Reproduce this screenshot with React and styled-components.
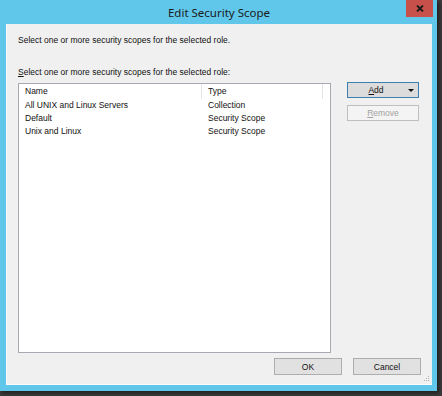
import React from "react";
import styled, { createGlobalStyle } from "styled-components";

const GlobalStyle = createGlobalStyle`
  html, body {
    margin: 0;
    padding: 0;
    background: #3b3b3b;
  }
  #root {
    width: 442px;
    height: 396px;
    overflow: hidden;
  }
`;

const scopes = [
  { name: "All UNIX and Linux Servers", type: "Collection" },
  { name: "Default", type: "Security Scope" },
  { name: "Unix and Linux", type: "Security Scope" },
];

const StyledWindow = styled.div`
  width: 437px;
  height: 391px;
  background: #61c7ea;
  box-sizing: border-box;
  padding: 0 5px 6px 6px;
  display: flex;
  flex-direction: column;
  box-shadow: 2px 2px 4px rgba(0, 0, 0, 0.5);
`;

const StyledTitleBar = styled.div`
  height: 24px;
  display: flex;
  align-items: center;
  justify-content: center;
  position: relative;
  font-family: "Noto Sans", "DejaVu Sans", sans-serif;
  font-size: 11.5px;
  color: #1a1a1a;
  padding-top: 1px;
  box-sizing: border-box;
`;

const StyledClose = styled.div`
  position: absolute;
  top: 0;
  right: -1px;
  width: 27px;
  height: 17px;
  background: #c7504a;
  display: flex;
  align-items: center;
  justify-content: center;
  svg {
    display: block;
  }
`;

const StyledClient = styled.div`
  flex: 1;
  background: #f0f0f0;
  border-left: 1px solid #fbfbfb;
  border-bottom: 1px solid #fbfbfb;
  box-sizing: border-box;
  padding: 0 11px 0 11px;
  display: flex;
  flex-direction: column;
  font-family: "Liberation Sans", Arial, sans-serif;
  font-size: 8.5px;
  color: #111;
  position: relative;
`;

const StyledText = styled.div`
  height: ${(p) => p.h}px;
  display: flex;
  align-items: flex-end;
  line-height: 10px;
  padding-bottom: ${(p) => p.pb || 0}px;
  box-sizing: border-box;
`;

const StyledMain = styled.div`
  display: flex;
  gap: 16px;
`;

const StyledLeft = styled.div`
  width: 313px;
  display: flex;
  flex-direction: column;
`;

const StyledList = styled.div`
  height: 270px;
  background: #fff;
  border: 1px solid #a7aab0;
  box-sizing: border-box;
  display: flex;
  flex-direction: column;
`;

const StyledRow = styled.div`
  display: grid;
  grid-template-columns: 183px 121px 1fr;
  height: ${(p) => (p.header ? 15 : 13)}px;
  align-items: center;
  line-height: 13px;
`;

const StyledCell = styled.div`
  padding-left: ${(p) => p.pl}px;
  height: 100%;
  display: flex;
  align-items: center;
  white-space: nowrap;
  border-right: ${(p) => (p.divider ? "1px solid #e5e5e5" : "none")};
  box-sizing: border-box;
`;

const StyledRight = styled.div`
  display: flex;
  flex-direction: column;
  gap: 7px;
  margin-top: -1px;
`;

const StyledButton = styled.div`
  width: ${(p) => p.w}px;
  height: ${(p) => p.h}px;
  box-sizing: border-box;
  display: flex;
  align-items: center;
  justify-content: center;
  padding-right: ${(p) => p.pr || 0}px;
  position: relative;
  background: ${(p) =>
    p.disabled ? "#f4f4f4" : p.focused ? "#dcdcdc" : "#e1e1e1"};
  border: 1px solid
    ${(p) => (p.disabled ? "#bfbfbf" : p.focused ? "#3c7fb1" : "#adadad")};
  color: ${(p) => (p.disabled ? "#a2a2a2" : "#111")};
  u {
    text-decoration: underline;
  }
`;

const StyledArrow = styled.span`
  position: absolute;
  right: 4px;
  top: 6px;
  width: 0;
  height: 0;
  border-left: 3.5px solid transparent;
  border-right: 3.5px solid transparent;
  border-top: 3.5px solid #111;
`;

const StyledFooter = styled.div`
  display: flex;
  justify-content: flex-end;
  gap: 11px;
  padding-top: 5px;
`;

const StyledGrip = styled.svg`
  position: absolute;
  right: 2px;
  bottom: 2px;
`;

export default function App() {
  return (
    <>
      <GlobalStyle />
      <StyledWindow>
        <StyledTitleBar>
          Edit Security Scope
          <StyledClose>
            <svg width="8" height="7" viewBox="0 0 8 7">
              <path d="M1 0.5 L7 6.5 M7 0.5 L1 6.5" stroke="#1a1a1a" strokeWidth="1.8" />
            </svg>
          </StyledClose>
        </StyledTitleBar>
        <StyledClient>
          <StyledText h={22} pb={1}>
            Select one or more security scopes for the selected role.
          </StyledText>
          <StyledText h={37} pb={6}>
            <span>
              <u>S</u>elect one or more security scopes for the selected role:
            </span>
          </StyledText>
          <StyledMain>
            <StyledLeft>
              <StyledList>
                <StyledRow header>
                  <StyledCell pl={6} divider>Name</StyledCell>
                  <StyledCell pl={6} divider>Type</StyledCell>
                  <StyledCell />
                </StyledRow>
                {scopes.map((s) => (
                  <StyledRow key={s.name}>
                    <StyledCell pl={6}>{s.name}</StyledCell>
                    <StyledCell pl={6}>{s.type}</StyledCell>
                    <StyledCell />
                  </StyledRow>
                ))}
              </StyledList>
            </StyledLeft>
            <StyledRight>
              <StyledButton w={72} h={16} pr={14} focused>
                <span>
                  <u>A</u>dd
                </span>
                <StyledArrow />
              </StyledButton>
              <StyledButton w={72} h={16} disabled>
                <span>
                  <u>R</u>emove
                </span>
              </StyledButton>
            </StyledRight>
          </StyledMain>
          <StyledFooter>
            <StyledButton w={68} h={17}>OK</StyledButton>
            <StyledButton w={68} h={17}>Cancel</StyledButton>
          </StyledFooter>
          <StyledGrip width="6" height="6" viewBox="0 0 6 6">
            <rect x="4" y="0" width="1" height="1" fill="#b5b5b5" />
            <rect x="2" y="2" width="1" height="1" fill="#b5b5b5" />
            <rect x="4" y="2" width="1" height="1" fill="#b5b5b5" />
            <rect x="0" y="4" width="1" height="1" fill="#b5b5b5" />
            <rect x="2" y="4" width="1" height="1" fill="#b5b5b5" />
            <rect x="4" y="4" width="1" height="1" fill="#b5b5b5" />
          </StyledGrip>
        </StyledClient>
      </StyledWindow>
    </>
  );
}
